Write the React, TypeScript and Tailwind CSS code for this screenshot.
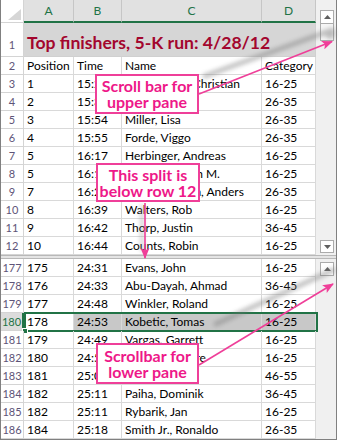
import React from 'react';

type RowData = [string, string, string, string, string];

const upper: RowData[] = [
  ['3', '1', '15:22', 'Stephenson, Christian', '16-25'],
  ['4', '2', '15:38', 'Lee, Kim', '26-35'],
  ['5', '3', '15:54', 'Miller, Lisa', '26-35'],
  ['6', '4', '15:55', 'Forde, Viggo', '26-35'],
  ['7', '5', '16:17', 'Herbinger, Andreas', '16-25'],
  ['8', '5', '16:17', 'Gonzalez, Juan M.', '16-25'],
  ['9', '7', '16:28', 'Vanderhoeven, Anders', '26-35'],
  ['10', '8', '16:39', 'Walters, Rob', '16-25'],
  ['11', '9', '16:42', 'Thorp, Justin', '36-45'],
  ['12', '10', '16:44', 'Counts, Robin', '16-25'],
];

const lower: RowData[] = [
  ['177', '175', '24:31', 'Evans, John', '16-25'],
  ['178', '176', '24:33', 'Abu-Dayah, Ahmad', '36-45'],
  ['179', '177', '24:48', 'Winkler, Roland', '16-25'],
  ['180', '178', '24:53', 'Kobetic, Tomas', '16-25'],
  ['181', '179', '24:49', 'Vargas, Garrett', '16-25'],
  ['182', '180', '24:55', 'Fournier, Pierre', '16-25'],
  ['183', '181', '25:02', 'Ito, Kenji', '46-55'],
  ['184', '182', '25:11', 'Paiha, Dominik', '36-45'],
  ['185', '182', '25:11', 'Rybarik, Jan', '16-25'],
  ['186', '184', '25:18', 'Smith Jr., Ronaldo', '26-35'],
];

function UpTri() {
  return (
    <svg width="7" height="4" viewBox="0 0 7 4">
      <path d="M0 4 L3.5 0 L7 4 Z" fill="#5f5f5f" />
    </svg>
  );
}

function DownTri() {
  return (
    <svg width="7" height="4" viewBox="0 0 7 4">
      <path d="M0 0 L3.5 4 L7 0 Z" fill="#5f5f5f" />
    </svg>
  );
}

function Row({ d, selected }: { d: RowData; selected?: boolean }) {
  return (
    <div className="relative flex h-[18px] shrink-0">
      {selected ? (
        <div className="w-[23px] shrink-0 border-b border-b-[#d4d4d4] border-r-2 border-r-[#217346] bg-[#dcdcdc] text-center text-[11px] leading-[17px] text-[#217346]">
          {d[0]}
        </div>
      ) : (
        <div className="w-[23px] shrink-0 border-b border-r border-[#d4d4d4] text-center text-[11px] leading-[17px] text-[#5e5478]">
          {d[0]}
        </div>
      )}
      <div className="w-[50px] shrink-0 overflow-hidden whitespace-nowrap border-b border-r border-[#d9d9d9] px-[3px] leading-[17px]">
        {d[1]}
      </div>
      <div
        className={
          selected
            ? 'w-[48px] shrink-0 overflow-hidden whitespace-nowrap border-b border-r border-[#d9d9d9] bg-[#c8c8c8] px-[3px] leading-[17px]'
            : 'w-[48px] shrink-0 overflow-hidden whitespace-nowrap border-b border-r border-[#d9d9d9] px-[3px] leading-[17px]'
        }
      >
        {d[2]}
      </div>
      <div
        className={
          selected
            ? 'w-[140px] shrink-0 overflow-hidden whitespace-nowrap border-b border-r border-[#d9d9d9] bg-[#c8c8c8] px-[3px] leading-[17px]'
            : 'w-[140px] shrink-0 overflow-hidden whitespace-nowrap border-b border-r border-[#d9d9d9] px-[3px] leading-[17px]'
        }
      >
        {d[3]}
      </div>
      <div
        className={
          selected
            ? 'w-[54px] shrink-0 overflow-hidden whitespace-nowrap border-b border-r border-[#d9d9d9] bg-[#c8c8c8] px-[3px] leading-[17px]'
            : 'w-[54px] shrink-0 overflow-hidden whitespace-nowrap border-b border-r border-[#d9d9d9] px-[3px] leading-[17px]'
        }
      >
        {d[4]}
      </div>
      {selected && (
        <>
          <div className="pointer-events-none absolute -top-[1px] left-[23px] h-[20px] w-[294px] border-2 border-[#217346]" />
          <div className="pointer-events-none absolute left-[21px] top-[15px] h-[6px] w-[6px] border border-white bg-[#217346]" />
        </>
      )}
    </div>
  );
}

function Callout({ className, l1, l2 }: { className: string; l1: string; l2: string }) {
  return (
    <div
      className={
        'absolute flex flex-col items-center justify-center border-2 border-[#ef3f99] bg-white text-[16px] font-bold leading-[16px] text-[#ee1889] ' +
        className
      }
    >
      <span className="whitespace-nowrap">{l1}</span>
      <span className="whitespace-nowrap">{l2}</span>
    </div>
  );
}

export default function App() {
  return (
    <div className="relative h-[443px] w-[339px] overflow-hidden bg-white font-['Lato','Liberation_Sans',sans-serif] text-[12px] text-black">
      <div className="flex w-[337px] flex-col border-b border-l border-r border-[#808080]">
        {/* upper pane */}
        <div className="flex h-[255px]">
          <div className="flex w-[315px] flex-col">
            {/* column headers */}
            <div className="flex h-[23px] shrink-0">
              <div className="relative w-[23px] shrink-0 border-b border-r border-[#d4d4d4] bg-white">
                <svg className="absolute left-[7px] top-[9px]" width="13" height="11" viewBox="0 0 13 11">
                  <path d="M13 0 L13 11 L0 11 Z" fill="#d6d6d6" />
                </svg>
              </div>
              <div className="w-[50px] shrink-0 border-b-2 border-r border-b-[#217346] border-r-[#c6c6c6] bg-[#e1e1e1] text-center leading-[21px] text-[#217346]">
                A
              </div>
              <div className="w-[48px] shrink-0 border-b-2 border-r border-b-[#217346] border-r-[#c6c6c6] bg-[#e1e1e1] text-center leading-[21px] text-[#217346]">
                B
              </div>
              <div className="w-[140px] shrink-0 border-b-2 border-r border-b-[#217346] border-r-[#c6c6c6] bg-[#e1e1e1] text-center leading-[21px] text-[#217346]">
                C
              </div>
              <div className="w-[54px] shrink-0 border-b-2 border-r border-b-[#217346] border-r-[#c6c6c6] bg-[#e1e1e1] text-center leading-[21px] text-[#217346]">
                D
              </div>
            </div>
            {/* title row */}
            <div className="flex h-[34px] shrink-0">
              <div className="flex w-[23px] shrink-0 items-end justify-center border-b border-r border-[#d4d4d4] pb-[3px] text-[11px] text-[#5e5478]">
                1
              </div>
              <div className="flex w-[292px] shrink-0 items-end whitespace-nowrap border-b border-r border-[#d0d0d0] bg-[#d6d6d6] pb-[3px] pl-[3px] text-[17.6px] font-bold leading-[20px] text-[#a3062e]">
                Top finishers, 5-K run: 4/28/12
              </div>
            </div>
            <Row d={['2', 'Position', 'Time', 'Name', 'Category']} />
            {upper.map((r) => (
              <Row key={r[0]} d={r} />
            ))}
          </div>
          {/* upper scrollbar */}
          <div className="flex w-[20px] flex-col bg-[#f0f0f0] pl-[4px] pt-[10px]">
            <div className="flex h-[14px] w-[14px] items-center justify-center border border-[#ababab] bg-white">
              <UpTri />
            </div>
            <div className="h-[17px] w-[14px] border border-t-0 border-[#ababab] bg-[#f6f6f6]" />
            <div className="flex-1" />
            <div className="mb-[2px] flex h-[13px] w-[14px] items-center justify-center border border-[#ababab] bg-white">
              <DownTri />
            </div>
          </div>
        </div>
        {/* split bar */}
        <div className="h-[4px] border-b border-t border-[#b8b8b8] bg-[#e4e4e4]" />
        {/* lower pane */}
        <div className="flex h-[180px]">
          <div className="flex w-[315px] flex-col">
            {lower.map((r) => (
              <Row key={r[0]} d={r} selected={r[0] === '180'} />
            ))}
          </div>
          <div className="flex w-[20px] flex-col bg-[#f0f0f0] pl-[4px] pt-[3px]">
            <div className="flex h-[14px] w-[14px] items-center justify-center border border-[#ababab] bg-white">
              <UpTri />
            </div>
          </div>
        </div>
      </div>

      {/* arrows and shadows */}
      <svg className="pointer-events-none absolute left-0 top-0" width="339" height="443" viewBox="0 0 339 443">
        <defs>
          <filter id="blur" x="-20%" y="-20%" width="140%" height="140%">
            <feGaussianBlur stdDeviation="2.2" />
          </filter>
          <marker id="ah" markerWidth="11" markerHeight="9" refX="10" refY="4.5" orient="auto" markerUnits="userSpaceOnUse">
            <path d="M0 0 L11 4.5 L0 9 L2.5 4.5 Z" fill="#ef3f99" />
          </marker>
        </defs>
        <g filter="url(#blur)" opacity="0.45">
          <line x1="205" y1="76" x2="332" y2="30" stroke="#777" strokeWidth="5" strokeLinecap="round" />
          <circle cx="330" cy="34" r="5" fill="#777" />
          <line x1="216" y1="324" x2="333" y2="270" stroke="#777" strokeWidth="5" strokeLinecap="round" />
          <line x1="142" y1="206" x2="142" y2="250" stroke="#888" strokeWidth="3" strokeLinecap="round" />
        </g>
        <line x1="199" y1="94" x2="332" y2="41.5" stroke="#ef3f99" strokeWidth="1.6" markerEnd="url(#ah)" />
        <line x1="145" y1="203" x2="145" y2="258" stroke="#ef3f99" strokeWidth="1.6" markerEnd="url(#ah)" />
        <line x1="199" y1="365" x2="333" y2="284" stroke="#ef3f99" strokeWidth="1.6" markerEnd="url(#ah)" />
      </svg>

      <Callout className="left-[95px] top-[74px] h-[40px] w-[104px]" l1="Scroll bar for" l2="upper pane" />
      <Callout className="left-[96px] top-[163px] h-[39px] w-[104px]" l1="This split is" l2="below row 12" />
      <Callout className="left-[96px] top-[343px] h-[41px] w-[103px]" l1="Scrollbar for" l2="lower pane" />
    </div>
  );
}
